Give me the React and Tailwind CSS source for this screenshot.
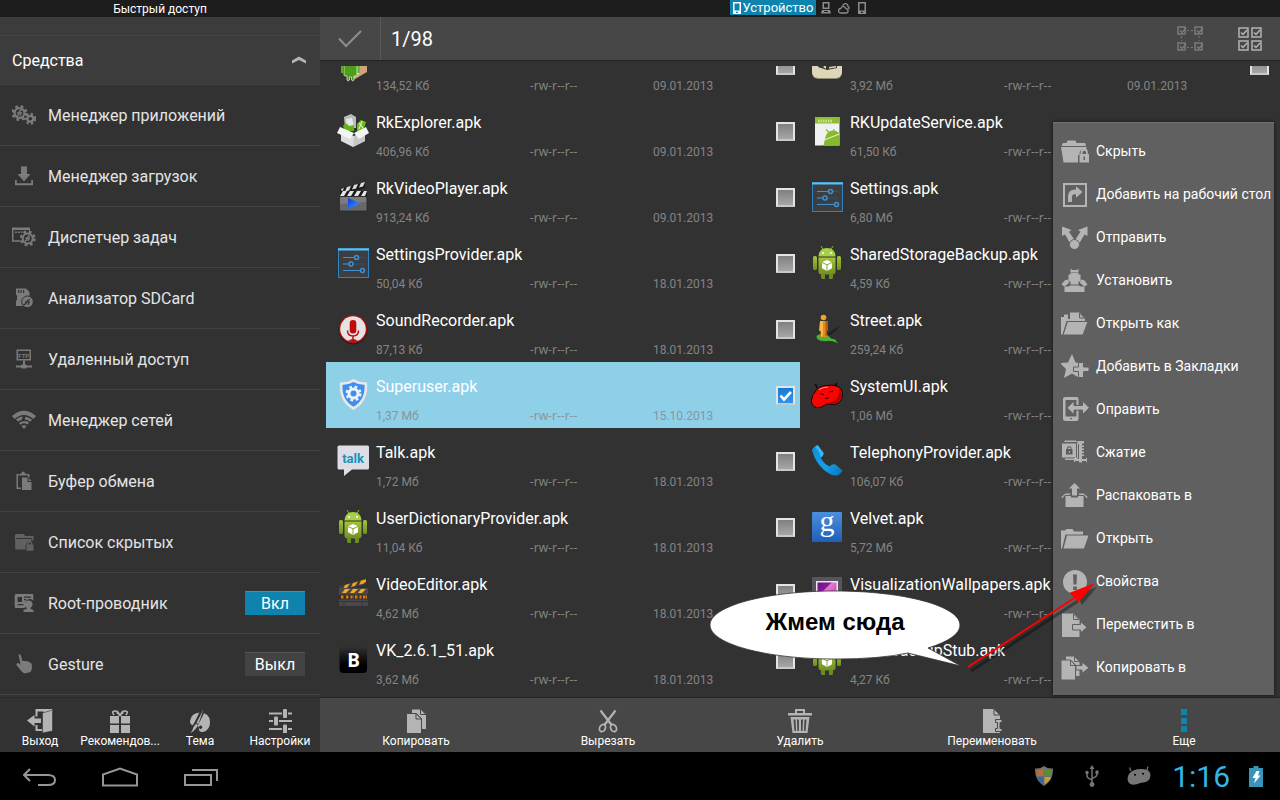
import { useState } from 'react';
import clsx from 'clsx';

/* ---------- small drawing helpers ---------- */

function Svg({ w = 24, h = 24, className, children }) {
  return (
    <svg width={w} height={h} viewBox={`0 0 ${w} ${h}`} fill="currentColor" className={clsx('shrink-0', className)} aria-hidden="true">
      {children}
    </svg>
  );
}

function Gear({ cx, cy, r, hole, n = 8 }) {
  const tooth = (Math.PI * (r + 1)) / n;
  return (
    <g fill="none" stroke="currentColor">
      <circle cx={cx} cy={cy} r={r + 0.8} strokeWidth="2.4" strokeDasharray={`${tooth} ${tooth}`} />
      <circle cx={cx} cy={cy} r={(r + hole) / 2} strokeWidth={r - hole} />
    </g>
  );
}

/* ---------- sidebar icons ---------- */

const gearsIcon = (
  <Svg>
    <Gear cx={7.5} cy={10} r={6} hole={3.8} />
    <path d="M4.500 12.800q2 0 2.500-2.800t3-2.800M5 9.800h5M8 12.800l1.200-3" fill="none" stroke="currentColor" strokeWidth="1.300" />
    <Gear cx={18.3} cy={15.800} r={4} hole={1.8} n={7} />
  </Svg>
);

const downloadIcon = (
  <Svg>
    <path d="M9 2.500h6v7.500h3.500l-6.500 7.500l-6.500-7.500h3.500z" />
    <path d="M3 16h1.800v3.200h14.400v-3.200h1.800v5.300h-18z" />
  </Svg>
);

const tasksIcon = (
  <Svg>
    <path d="M0 2.500h18v3.500h-1.500v-1h-15v10.200h7v1.600h-8.500z" />
    <path d="M3 6.500h2v1.500h-2zM6 6.500h2v1.500h-2zM9 6.500h2v1.500h-2z" />
    <circle cx="15.700" cy="13.400" r="8" fill="#323232" />
    <Gear cx={15.700} cy={13.400} r={6} hole={4} />
    <path d="M12.700 16q2 0 2.500-2.600t3-2.600M13.200 13.200h5M16 16l1.200-2.800" fill="none" stroke="currentColor" strokeWidth="1.300" />
  </Svg>
);

const sdIcon = (
  <Svg>
    <path fillRule="evenodd" d="M4 2.500h10l3.500 3.500v14h-13.500v-5l1-1.500v-4l-1-1zM6 4v3h1.200v-3zM8.500 4v3h1.200v-3zM11 4v3h1.200v-3z" />
    <circle cx="15.500" cy="15.800" r="5.800" stroke="#323232" />
    <path d="M11.500 18.500q2.500 0 3.200-2.500t3.300-2.500M13 15.800h5M16 18.800l1.400-3" fill="none" stroke="#323232" strokeWidth="1.200" />
  </Svg>
);

const ftpIcon = (
  <Svg>
    <path fillRule="evenodd" d="M4.500 2.500h14.500v11h-14.500zM6 4v8h11.500v-8z" />
    <text x="11.750" y="10.500" textAnchor="middle" fontSize="6" fontWeight="700" fontFamily="Roboto, sans-serif">FTP</text>
    <path d="M11 13.500h2v4.500h-2zM4 18.500h5l1-1h4l1 1h5v2h-5l-1 1h-4l-1-1h-5z" />
  </Svg>
);

const wifiIcon = (
  <Svg>
    <path d="M0 8q12-10.500 24 0l-2.600 3q-9.400-8-18.800 0z" />
    <path d="M4 11.600q3.500-3 7-3l-1.500 3.400q-2 .3-3.500 1.800zM13.500 8.700q3.500.4 6.500 3l-1.700 2q-2.600-2.200-5.800-2.200z" />
    <path d="M7 15q2-1.800 4.500-1.700h3.500q1.300.6 2 1.500l-1.600 1.700q-3.400-2.400-6.800.2zM9.500 18q2.500-1.600 5 0l-2.500 3z" />
  </Svg>
);

const clipboardIcon = (
  <Svg>
    <path d="M4.500 5h3v1.500h-1.500v12h3v1.500h-4.500zM14.500 5h3v3.500h-1.500v-2h-1.500z" />
    <path d="M8 6.500v-2h1.500q.5-2 1.700-2t1.700 2h1.600v2z" />
    <path d="M10 8.500h5.500v4.500h4v8h-9.500z" />
    <path d="M16.500 9l3 3h-3z" />
  </Svg>
);

const hiddenIcon = (
  <Svg>
    <path d="M4 4h8l1 2h8.500v4.500h-1.500v-2.500h-15.500v3h-1.500v-6z" />
    <path d="M4.500 9h15v2q-4.500-.5-5 3v1h-1v4.500h-9q-1.300 0-1.300-1.500v-7.500z" />
    <path fillRule="evenodd" d="M14.500 14.500h1v-1.500q.3-2 2.400-2t2.400 2v1.500h1.200v6.200h-7zM16.800 14.500h2.200v-1.300q-1.100-1.400-2.200 0z" />
  </Svg>
);

const rootIcon = (
  <Svg>
    <path fillRule="evenodd" d="M4 3h16.500q.8.2.8 1v5.500q-3-2.500-6.200-.8q-3 2-1.500 6.300l-1 2h-8.600q-1.300 0-1.300-1.300v-11.400q.1-1 1.300-1.300zM5.500 6v5h4.500v-5zM12 5.500v1.200h7v-1.200zM12 8v1.200h2v-1.200zM5.500 13v1.200h6v-1.200z" />
    <path d="M16.700 9.500a3.600 3.800 0 0 1 1.800 7.200v1l3 1.300v2h-10v-2l3.200-1.300v-1a3.600 3.800 0 0 1 2-7.200z" />
  </Svg>
);

const handIcon = (
  <Svg>
    <path d="M6.500 2.500q1.600-1 2.200.8l1.800 6q1.200-1 2.500 0q1.500-.8 2.500.3q1.500-.5 2.200.8q1.600 0 2 1.800l.3 4.500l-1.500 3.300l-5.500 1.500q-2-.3-3.200-2l-5-6q-1-1.500.3-2.200t2.700.8l.8.800z" />
  </Svg>
);

/* ---------- popup menu icons (28x28) ---------- */

const M = ({ children }) => (
  <Svg w={28} h={28} className="text-[#b4b4b4]">{children}</Svg>
);

const lockFolder = (
  <M>
    <path d="M1 6.500l1-1.500h3.500l1-2.500h8l1 2.500h8.500l.8 1.500v1.500h-23.800z" />
    <path d="M0 9h25.500v2.500q-5.500-2-7 3.500v2h-1.500v7.500h-14.500z" />
    <path fillRule="evenodd" d="M18.500 16h1.200v-2q.3-3.600 3.600-3.600t3.500 3.600v2h1.200v8.500h-9.500zM21.500 16h3.600v-2q-1.800-2.600-3.600 0zM22.500 18.500v3.500h1.500v-3.500z" />
  </M>
);

const desktopIcon = (
  <M>
    <path fillRule="evenodd" d="M2 2h24v24h-24zM4 4v20h20v-20z" />
    <path d="M7 21v-6q.4-6.500 7-6.500h1v-3.200l6.500 5.700l-6.500 5.700v-3.400h-1.500q-2.500 0-2.500 2.500v5.200z" />
  </M>
);

const sendIcon = (
  <M>
    <path d="M1 2.500l9.500 3.500l-2.500 1.800l5.500 8.200l-4.500 3l-5-8.500l-3 1.500zM26.500 2.500l-9.500 3.500l2.500 1.800l-5.500 8.200l4.500 3l5-8.500l3 1.500z" />
    <circle cx="13.500" cy="20.500" r="5" stroke="#606060" />
  </M>
);

const installIcon = (
  <M>
    <path d="M9.500 1.500l1.500 1.500h5l1.500-1.500v3.500h-8z" />
    <path d="M9.500 5.500h8v2h2v7h-2v3h-8v-3h-2v-7h2z" />
    <path d="M7 12.500l-3.500 1l-3 4l3 2l4.500-3.500zM20 12.500l3.500 1l3 4l-3 2l-4.500-3.500z" />
    <path d="M3.500 19.500h4l1.500-1h9l1.500 1h4v5.500h-20z" />
  </M>
);

const openAsIcon = (
  <M>
    <path d="M0 7h3v-2.500h4v4.500h17v2h-18.500l-4 13.500h-1.500z" />
    <path d="M9 2.500h9.500l5 5.500v2.500h-14.500z" />
    <path d="M18.500 3v5h5z" stroke="#606060" />
    <path d="M6.500 11.500h20.500l-5 13.500h-20z" stroke="#606060" />
  </M>
);

const bookmarkIcon = (
  <M>
    <path d="M11 1l3.500 8.500l9 .5l-7 6l2 9l-7.500-4.500l-8 4.500l2-9l-6-6l8-.5z" />
    <path d="M17.500 9.500h5v4.500h5.500v4.500h-5.500v6h-5v-6h-5v-4.500h5z" stroke="#606060" />
  </M>
);

const transferIcon = (
  <M>
    <path fillRule="evenodd" d="M4.500 1h11q2 0 2 2v20q0 2-2 2h-11q-2.500 0-2.500-2v-20q0-2 2.500-2zM4.500 4v16.500h11v-16.500zM9.200 22v1.300h1.800v-1.300z" />
    <path d="M6 11.800l7-6.800v4.500h8.500v-4.500l7 6.800l-7 6.800v-4.500h-8.500v4.500z" stroke="#606060" />
  </M>
);

const zipIcon = (
  <M>
    <path d="M4 1.500h11l1 1.500h-13zM1 4.500h14v14h-14zM3.500 19.500h10l2-1.500v-14h1.500v15.500l-1.500 1.500h-11z" />
    <path d="M5 10h1v-1.500q2.300-3 4.500 0v1.500h1v5.500h-6.500z" fill="#5c5c5c" />
    <path d="M7 10h2.600v-1q-1.300-1.500-2.600 0zM7.800 12h1v2h-1z" />
    <path d="M16.500 2h6.500v2.500h-2v2h2v1.500h-2v1.500h2v1.500h-2v1.500h2v1.500h-2v1.500h2v1.500h-2v3h4v-1h1v4h-1v-1h-4v1.500h-3v-1.500h-4v1h-1v-4h1v1h4v-15h-1.500z" />
    <path d="M15.500 4v14.500" stroke="#606060" />
  </M>
);

const unpackIcon = (
  <M>
    <path d="M13.500 1l5.500 5.500h-3v7h-5v-7h-3z" />
    <path d="M4.500 14h5.500v1.500h7v-1.500h5.500v11h-18z" />
    <path d="M4.500 11.500h5l-1 1.500h-4.500l-2.500 3l-1.500-.8zM22.500 11.500h-5l1 1.500h4.500l2.500 3l1.500-.8z" />
  </M>
);

const openIcon = (
  <M>
    <path d="M0 5.500h4l1.500-1.500h6l1.500 2.500h9v3h-17.500l-3.500 14h-1z" />
    <path d="M6 10.500h21.500l-4.500 13h-20.500z" />
  </M>
);

const propsIcon = (
  <M>
    <path fillRule="evenodd" d="M14 2a12 12 0 1 1 0 24a12 12 0 0 1 0-24zM12 6.500l.5 10h3l.5-10zM12.200 18.500v3.500h3.600v-3.500z" />
  </M>
);

const moveIcon = (
  <M>
    <path d="M1 2.500h11.500l6 6v17.500h-17.500z" />
    <path d="M12.500 3v5.500h5.500z" stroke="#606060" />
    <path d="M11.500 13.500h8v-3l6.500 5.800l-6.500 5.700v-3h-8z" stroke="#606060" />
  </M>
);

const copyToIcon = (
  <M>
    <path d="M5 2.500h8.500l5 5v14.500h-13.500z" />
    <path d="M13.500 2.500v5h5z" stroke="#606060" />
    <path d="M0 6h9.500l5 5v15h-14.500z" stroke="#606060" />
    <path d="M9.500 6v5.500h5z" stroke="#606060" />
    <path d="M15 11.500h6v-3.500l7 5.800l-7 5.700v-3.500h-6z" stroke="#606060" />
  </M>
);

/* ---------- toolbar icons ---------- */

const exitIcon = (
  <Svg w={26}>
    <path d="M8.500 0h17v3l-9 1v-1.500h-6v5h-2zM8.500 16h2v4h5v2h-7z" />
    <path d="M15.500 4l10-3v21l-10 2z" stroke="#323232" strokeWidth=".6" />
    <path d="M0 11.500l7.500-5.500v3.500h6.500v4.500h-6.500v3.500z" />
  </Svg>
);

const giftIcon = (
  <Svg>
    <path d="M2 7h9v7.500h-9zM13 7h9v7.500h-9zM2 16h9v8h-9zM13 16h9v8h-9z" />
    <path d="M11.500 7q-.5-5-4.500-5t-1 4M12.500 7q.5-5 4.500-5t1 4M12 7q-1-3-3.500-3M12 7q1-3 3.500-3" fill="none" stroke="currentColor" strokeWidth="1.700" />
  </Svg>
);

const themeIcon = (
  <Svg>
    <path fillRule="evenodd" d="M12 3.500q9.500.5 10 9t-7 10.500q-4 .5-4-3t-2.500-3.500q-6.500 1-6.500-4.500q1-8 10-8.500zM12.600 16.500a1.700 1.700 0 1 0 .1 0z" />
    <path d="M15.500 0l-7 14.500l-5.500 9" stroke="#323232" strokeWidth="4.500" fill="none" />
    <path d="M15.500 0l-5 15l-2-1zM8 14.700l2 1.300q-1.500 4.500-7.500 8q2.500-3.500 3-6z" />
  </Svg>
);

const settingsIcon = (
  <Svg>
    <path d="M1 3.500h13v2h-13zM20 3.500h4v2h-4zM1 11h4v2h-4zM11 11h13v2h-13zM1 19h13v2h-13zM20 19h4v2h-4z" />
    <rect x="15" y="0" width="4" height="9" rx="1" />
    <rect x="6" y="7.500" width="4" height="9" rx="1" />
    <rect x="15" y="15.500" width="4" height="9" rx="1" />
  </Svg>
);

const copyIcon = (
  <Svg>
    <path d="M8 .5h9l5 5v14.500h-14z" />
    <path d="M16.500 0v5.500h5.500z" stroke="#474747" />
    <path d="M2.500 4.500h10l5 5v15h-15z" stroke="#474747" />
    <path d="M12 4.500v5.500h5.500z" stroke="#474747" />
  </Svg>
);

const cutIcon = (
  <Svg>
    <path d="M4.500 1.500l11.500 15M19.500 1.500l-11.500 15" fill="none" stroke="currentColor" strokeWidth="2.200" />
    <g fill="none" stroke="currentColor" strokeWidth="1.800">
      <ellipse cx="6.500" cy="19" rx="2.800" ry="3.800" transform="rotate(28 6.500 19)" />
      <ellipse cx="17.500" cy="19" rx="2.800" ry="3.800" transform="rotate(-28 17.500 19)" />
    </g>
  </Svg>
);

const trashIcon = (
  <Svg>
    <path fillRule="evenodd" d="M7 0h10v4h7v2.500h-24v-2.500h7zM9 2v2h6v-2z" />
    <path fillRule="evenodd" d="M2.500 8h19l-2 16h-15zM5.500 10.500l1 11.500h1.500l-.5-11.500zM9 10.500l.4 11.500h1.500v-11.500zM13 10.500v11.500h1.500l.5-11.500zM16.500 10.500l-.5 11.500h1.500l1-11.500z" />
  </Svg>
);

const renameIcon = (
  <Svg>
    <path d="M3 0h11.500l5.500 6v18h-17z" />
    <path d="M14 0v6h6z" stroke="#474747" />
    <path d="M15.500 10.500h6.500v3h-2v6h2v3h-6.500v-3h2v-6h-2z" stroke="#474747" />
  </Svg>
);

const moreIcon = (
  <Svg className="text-[#0e83ad]">
    <path d="M9 0h6v6h-6zM9 9h6v6h-6zM9 17h6v6h-6z" />
  </Svg>
);

/* ---------- file icons (32x34) ---------- */

const A = ({ children }) => (
  <svg width="32" height="34" viewBox="0 0 32 34" className="shrink-0" aria-hidden="true">{children}</svg>
);

const androidApp = (
  <A>
    <defs>
      <linearGradient id="droid" x1="0" y1="0" x2="0" y2="1">
        <stop offset="0" stopColor="#a6c43a" />
        <stop offset="1" stopColor="#6e8f22" />
      </linearGradient>
    </defs>
    <path d="M10 0l2 3.500M22 0l-2 3.500" stroke="#8fb32c" strokeWidth="1" />
    <path d="M7.500 10.500q.5-8.500 8.500-8.500t8.500 8.500z" fill="#a7d04a" />
    <circle cx="12" cy="7" r="1" fill="#fff" />
    <circle cx="20" cy="7" r="1" fill="#fff" />
    <rect x="2" y="10" width="4" height="14" rx="1.500" fill="url(#droid)" />
    <rect x="26" y="10" width="4" height="14" rx="1.500" fill="url(#droid)" />
    <path d="M7.500 11.500h17v14q0 3-3 3h-11q-3 0-3-3z" fill="url(#droid)" />
    <path d="M10 28h4v5h-2.500q-1.500 0-1.500-1.500zM18 28h4v3.500q0 1.500-1.500 1.500h-2.500z" fill="#6b8c22" />
    <path d="M16 14l5 2.300v6l-5 2.700l-5-2.700v-6z" fill="#fff" />
    <path d="M11 16.500l5 2.300l5-2.300M16 18.800v6" fill="none" stroke="#8aa63b" strokeWidth="1" />
  </A>
);

const slidersApp = (
  <A>
    <rect x="1.500" y="2.500" width="30" height="29" fill="#3c3e41" stroke="#2f83c0" />
    <path d="M1 3.500h31" stroke="#5bc3f0" strokeWidth="2" />
    <path d="M6 11.500h21M6 18h21M6 24.500h21" stroke="#22577f" strokeWidth="1.200" />
    <path d="M6 11.500h12M6 18h7M6 24.500h18" stroke="#4090cf" strokeWidth="1.200" />
    <g fill="#3c3e41" stroke="#4090cf" strokeWidth="1.500">
      <circle cx="19.500" cy="11.500" r="2" />
      <circle cx="14" cy="18" r="2" />
      <circle cx="25.500" cy="24.500" r="2" />
    </g>
  </A>
);

const marketApp = (
  <A>
    <path d="M3 10h27v14l-12 7l-4-2z" fill="#d0a37e" />
    <path d="M4 14h18v12h-2v-9z" fill="#dfeedd" />
    <path d="M7 15h13v12q0 1-1.500 1h-1.500v4q-1 2-2.500 0v-3h-2v3q-1.500 2-2.500 0v-4h-1.500q-1.500 0-1.500-1z" fill="#4f9d1c" stroke="#d5eec2" strokeWidth=".8" />
    <path d="M5 18v7M21.500 18v7" stroke="#5cad25" strokeWidth="2" />
  </A>
);

const boxApp = (
  <A>
    <path d="M7 3l7-3l5 3v11h-11z" fill="#b9bdb9" />
    <path d="M9 5l6-1l2 9l-7 2z" fill="#e5e8e5" />
    <path d="M6 12q3-5 6 0l5-1v6h-9z" fill="#62b517" />
    <path d="M20 10l4-4l5 2l-3 9h-6z" fill="#6fc01f" />
    <path d="M22 9l4 5M25 7l-3 8" stroke="#fff" strokeWidth=".9" />
    <path d="M4 18l13 4l11-4v9l-12 6l-12-6z" fill="#dedede" />
    <path d="M17 22l11-4v9l-12 6z" fill="#c7c7c7" />
    <path d="M3 13l14 6l-4 6l-13-6zM29 13l-12 6l5 6l10-6z" fill="#f4f4f4" />
  </A>
);

const clapperApp = (
  <A>
    <defs>
      <linearGradient id="play" x1="0" y1="0" x2="1" y2="1">
        <stop offset="0" stopColor="#1133e8" />
        <stop offset="1" stopColor="#35a8ff" />
      </linearGradient>
    </defs>
    <path d="M3 9l25-7v6l-25 6z" fill="#1b1b1b" />
    <path d="M10 7l4-1l-2 4.500l-4 1zM17 5l4-1l-2 4.500l-4 1zM24 3l4-1l-2 4.500l-4 1zM4 9l3-1l-2 4z" fill="#ddd" />
    <rect x="3" y="11" width="27" height="5" fill="#1b1b1b" />
    <path d="M6 11h4l-3 5h-4zM13 11h4l-3 5h-4zM20 11h4l-3 5h-4zM27 11h3l-2 5h-4z" fill="#e6e6e6" />
    <rect x="2.500" y="17" width="27.500" height="14" fill="#67686b" stroke="#2a2a2a" strokeWidth=".8" />
    <path d="M3 17h26v5l-26 2z" fill="#7b7c7f" />
    <path d="M11 18l12 5.500l-12 5.500z" fill="url(#play)" />
  </A>
);

const micApp = (
  <A>
    <circle cx="16" cy="18" r="14.500" fill="#222" />
    <circle cx="16" cy="17" r="14" fill="#b90d0d" />
    <circle cx="16" cy="17" r="12.800" fill="#e6e2e2" />
    <rect x="12.700" y="8" width="6.600" height="13.500" rx="3.200" fill="#c00a0a" />
    <path d="M10.500 18.500q0 5.500 5.500 5.500t5.500-5.500M16 24v5" fill="none" stroke="#b31313" strokeWidth="1.500" />
    <path d="M11 29q5-4 10 0l-5 1.500z" fill="#b31313" />
  </A>
);

const shieldApp = (
  <A>
    <path d="M16.500 .5q6 4 14 3.500q2 20-14 28.500q-16-8.500-14-28.500q8 .5 14-3.500z" fill="#e6e9ec" stroke="#aab8c2" strokeWidth=".6" />
    <path d="M16.500 4q5 3 11 2.800q1 15-11 22q-12-7-11-22q6 .2 11-2.800z" fill="#3f90ee" />
    <g className="text-[#eef3f8]"><Gear cx={16.5} cy={15.5} r={6} hole={3} /></g>
  </A>
);

const talkApp = (
  <A>
    <path d="M2 1.500h28.500q1.500 0 1.500 1.500v21q0 1.500-1.500 1.500h-15.500l-8 6.500v-6.500h-5q-1.500 0-1.500-1.500v-21q0-1.500 1.500-1.500z" fill="#dddde6" />
    <text x="16" y="18.500" textAnchor="middle" fontSize="13" fontWeight="700" fontFamily="Roboto, sans-serif" fill="#2191b8">talk</text>
  </A>
);

const editorApp = (
  <A>
    <path d="M2 10l27-7v5l-27 7z" fill="#3d3d40" />
    <path d="M8 9l5-1.500l-3 4.500l-4 1zM16 7l5-1.500l-3 4.500l-4 1zM24 4.500l5-1.300v2.500l-3 2.200l-4 .8z" fill="#f2a21b" />
    <rect x="2" y="12" width="29" height="18" fill="#49494d" />
    <path d="M8 13h5l-4 4h-4zM16 13h5l-4 4h-4zM24 13h5l-4 4h-4z" fill="#f5ab22" />
    <path d="M2 18.500h29v5h-29z" fill="#35312e" />
    <path d="M4 21h3M9 21h3M13.500 21h3M18 21h3M22.500 21h2M26 21h4" stroke="#e07a12" strokeWidth="3" strokeDasharray="2 .6" />
    <path d="M2 25.500h29M7 26v3M25 26v3" stroke="#333338" strokeWidth="1" />
  </A>
);

const vkApp = (
  <A>
    <defs>
      <linearGradient id="vk" x1="0" y1="0" x2="0" y2="1">
        <stop offset="0" stopColor="#333" />
        <stop offset=".7" stopColor="#000" />
      </linearGradient>
    </defs>
    <rect x="2.500" y="4" width="27.500" height="27" rx="4" fill="url(#vk)" />
    <text x="16.500" y="24.500" textAnchor="middle" fontSize="19" fontWeight="700" fontFamily="'Noto Sans', sans-serif" fill="#fff">B</text>
  </A>
);

const creamApp = (
  <A>
    <rect x="1" y="1" width="30" height="30" rx="6" fill="#8f8a72" />
    <rect x="1" y="0" width="30" height="30" rx="6" fill="#ddd6b8" />
    <path d="M7 12h7l8 2l4-2v8l-10 2l-9-3z" fill="#37342c" />
    <path d="M12 19l3-2v4zM18 19l7-1v1.500l-7 1z" fill="#ddd6b8" />
  </A>
);

const updateApp = (
  <A>
    <rect x="4" y="3" width="24.500" height="28.500" fill="#f0f0f0" />
    <rect x="4" y="3" width="24.500" height="6.500" fill="#8dbd31" />
    <path d="M7 7h15" stroke="#c9e39a" strokeWidth="3" strokeDasharray="1.500 1" />
    <path d="M14 25q1-8 8-8.500q4 0 6.500 3v12h-16z" fill="#86b92c" />
    <path d="M15 15.500l3 3M23 15l-.5 3" stroke="#86b92c" strokeWidth="1.200" />
    <path d="M13 26l15.500-6" stroke="#e2efc6" strokeWidth="1.200" />
  </A>
);

const streetApp = (
  <A>
    <path d="M16 22l12-8l-2 4l-8 6z" fill="#222" />
    <path d="M5 24q4-4 12-1q2 4 7 4l4 5q-8-4-14-2.500q-9 0-9-5.500z" fill="#4fae3f" stroke="#1d3d18" strokeWidth=".7" />
    <circle cx="12.500" cy="5.500" r="2.800" fill="#f3a41d" />
    <path d="M9 9h7.500v10h-1v6h-6v-6h-1.500z" fill="#e98a16" />
    <path d="M9 9h3v14l-1 1.500h-1v-6h-1.500z" fill="#f7b84a" />
    <path d="M14.500 9h2.500v10h-1.500v5h-1z" fill="#b9590d" />
  </A>
);

const beanApp = (
  <A>
    <path d="M6 10l-1.500-4M24 8l2-3" stroke="#0a0a0a" strokeWidth="1.500" fill="none" />
    <path d="M4 14q3-6 12-6.500q10-1.500 14 3.500q3 6-.5 12q-3 4-9 3.500q-3-1-6 0q-4 4-9 3q-5.500-1.500-5-7.500q.5-5 3.500-8z" fill="#f70505" stroke="#1a0000" />
    <path d="M28.500 11q3.500 6 0 11.500q-3 3.500-8 3.500q-3-1-5-.5q7-1.500 10.500-5q2.500-4 2.500-9.500z" fill="#b00000" />
    <path d="M9 15.500l4 1M18 14l4-1M14 20q2 1.500 4-.5" stroke="#310000" strokeWidth="1" fill="none" />
    <path d="M8 11.500q4-2.500 9-2.500" stroke="#ff9a9a" strokeWidth="1" fill="none" />
  </A>
);

const phoneApp = (
  <A>
    <defs>
      <linearGradient id="tel" x1="0" y1="0" x2="1" y2="1">
        <stop offset="0" stopColor="#0f8fe0" />
        <stop offset=".6" stopColor="#12a0e8" />
        <stop offset="1" stopColor="#0870b8" />
      </linearGradient>
    </defs>
    <path d="M1 6q2-4 5.500-5l6 8q0 3-3 4.500q3 6 9 9q3-3 6-2l7 6q-2 4-5.500 5q-6 .5-13-5.500q-9-8-12-20z" fill="url(#tel)" />
    <path d="M6.500 1l6 8q0 3-3 4.500q-.5-6-5-10z" fill="#38b9f7" />
  </A>
);

const velvetApp = (
  <A>
    <defs>
      <linearGradient id="goog" x1="0" y1="0" x2="0" y2="1">
        <stop offset="0" stopColor="#4b90dd" />
        <stop offset="1" stopColor="#1f5fb8" />
      </linearGradient>
    </defs>
    <rect x="1" y="2" width="30" height="30" rx="1" fill="url(#goog)" />
    <text x="16" y="21" textAnchor="middle" fontSize="30" fontFamily="'Liberation Serif', serif" fill="#fff">g</text>
  </A>
);

const wallpaperApp = (
  <A>
    <defs>
      <linearGradient id="wall" x1="0" y1="0" x2="1" y2="1">
        <stop offset="0" stopColor="#6a1190" />
        <stop offset=".35" stopColor="#8a1a9a" />
        <stop offset=".4" stopColor="#e57ad6" />
        <stop offset="1" stopColor="#c12aa0" />
      </linearGradient>
    </defs>
    <rect x="1" y="1" width="30" height="30" fill="#55555b" />
    <rect x="5" y="5" width="22" height="22" fill="#e8e8e8" />
    <rect x="6.500" y="6.500" width="19" height="19" fill="url(#wall)" />
  </A>
);

/* ---------- data ---------- */

const TOOLS = [
  { label: 'Менеджер приложений', icon: gearsIcon },
  { label: 'Менеджер загрузок', icon: downloadIcon },
  { label: 'Диспетчер задач', icon: tasksIcon },
  { label: 'Анализатор SDCard', icon: sdIcon },
  { label: 'Удаленный доступ', icon: ftpIcon },
  { label: 'Менеджер сетей', icon: wifiIcon },
  { label: 'Буфер обмена', icon: clipboardIcon },
  { label: 'Список скрытых', icon: hiddenIcon, dim: true },
  { label: 'Root-проводник', icon: rootIcon, toggle: true },
  { label: 'Gesture', icon: handIcon, toggle: true },
];

const LEFT_ACTIONS = [
  { label: 'Выход', icon: exitIcon },
  { label: 'Рекомендов...', icon: giftIcon },
  { label: 'Тема', icon: themeIcon },
  { label: 'Настройки', icon: settingsIcon },
];

const FILE_ACTIONS = [
  { label: 'Копировать', icon: copyIcon },
  { label: 'Вырезать', icon: cutIcon },
  { label: 'Удалить', icon: trashIcon },
  { label: 'Переименовать', icon: renameIcon },
  { label: 'Еще', icon: moreIcon },
];

const MENU = [
  { label: 'Скрыть', icon: lockFolder },
  { label: 'Добавить на рабочий стол', icon: desktopIcon },
  { label: 'Отправить', icon: sendIcon },
  { label: 'Установить', icon: installIcon },
  { label: 'Открыть как', icon: openAsIcon },
  { label: 'Добавить в Закладки', icon: bookmarkIcon },
  { label: 'Оправить', icon: transferIcon },
  { label: 'Сжатие', icon: zipIcon },
  { label: 'Распаковать в', icon: unpackIcon },
  { label: 'Открыть', icon: openIcon },
  { label: 'Свойства', icon: propsIcon },
  { label: 'Переместить в', icon: moveIcon },
  { label: 'Копировать в', icon: copyToIcon },
];

const FILES = [
  { name: 'RkApkinstaller.apk', size: '134,52 Кб', date: '09.01.2013', icon: marketApp },
  { name: 'RKGameControl.apk', size: '3,92 Мб', date: '09.01.2013', icon: creamApp },
  { name: 'RkExplorer.apk', size: '406,96 Кб', date: '09.01.2013', icon: boxApp },
  { name: 'RKUpdateService.apk', size: '61,50 Кб', date: '09.01.2013', icon: updateApp },
  { name: 'RkVideoPlayer.apk', size: '913,24 Кб', date: '09.01.2013', icon: clapperApp },
  { name: 'Settings.apk', size: '6,80 Мб', date: '18.01.2013', icon: slidersApp },
  { name: 'SettingsProvider.apk', size: '50,04 Кб', date: '18.01.2013', icon: slidersApp },
  { name: 'SharedStorageBackup.apk', size: '4,59 Кб', date: '18.01.2013', icon: androidApp },
  { name: 'SoundRecorder.apk', size: '87,13 Кб', date: '18.01.2013', icon: micApp },
  { name: 'Street.apk', size: '259,24 Кб', date: '18.01.2013', icon: streetApp },
  { name: 'Superuser.apk', size: '1,37 Мб', date: '15.10.2013', icon: shieldApp },
  { name: 'SystemUI.apk', size: '1,06 Мб', date: '18.01.2013', icon: beanApp },
  { name: 'Talk.apk', size: '1,72 Мб', date: '18.01.2013', icon: talkApp },
  { name: 'TelephonyProvider.apk', size: '106,07 Кб', date: '18.01.2013', icon: phoneApp },
  { name: 'UserDictionaryProvider.apk', size: '11,04 Кб', date: '18.01.2013', icon: androidApp },
  { name: 'Velvet.apk', size: '5,72 Мб', date: '18.01.2013', icon: velvetApp },
  { name: 'VideoEditor.apk', size: '4,62 Мб', date: '18.01.2013', icon: editorApp },
  { name: 'VisualizationWallpapers.apk', size: '2,11 Мб', date: '18.01.2013', icon: wallpaperApp },
  { name: 'VK_2.6.1_51.apk', size: '3,62 Мб', date: '18.01.2013', icon: vkApp },
  { name: 'VoiceBackupStub.apk', size: '4,27 Кб', date: '18.01.2013', icon: androidApp },
];

/* ---------- components ---------- */

function StatusBar() {
  return (
    <header className="flex h-[17px] bg-[#1d1d1d] text-white">
      <p className="w-1/4 text-center text-[12px] leading-[18px]">Быстрый доступ</p>
      <div className="flex flex-1 items-start justify-center pr-1 text-[#8c8c8c]">
        <button className="flex h-[15px] items-center gap-[2px] bg-[#0e83ad] px-[3px] text-[13px] leading-[15px] text-white">
          <Svg w={8} h={12}>
            <path fillRule="evenodd" d="M0 0h8v12h-8zM1.500 1.500v7h5v-7zM3 9.700v1.200h2v-1.200z" />
          </Svg>
          Устройство
        </button>
        <Svg w={10} h={12} className="mt-[2px] ml-[5px]">
          <path fillRule="evenodd" d="M1.500 0h7v7h-7zM3 1.500v4h4v-4zM1 8h8l1 3.500h-10zM3 9v1h4v-1z" />
        </Svg>
        <Svg w={12} h={12} className="mt-[2px] ml-[7px]">
          <path d="M2.500 11q-2-.3-2-2.300t2.300-2.200q.7-2 2.700-1.800t2.400 2q2.200.2 2.200 2.200t-1.800 2.100zM4.500 4q1-2.800 3.300-2.400t2 2.500q1.600.8 1 2.900" fill="none" stroke="currentColor" strokeWidth="1.300" />
        </Svg>
        <Svg w={8} h={12} className="mt-[2px] ml-[8px]">
          <path fillRule="evenodd" d="M0 0h8v12h-8zM1.500 1.500v7h5v-7zM3 9.700v1.200h2v-1.200z" />
        </Svg>
      </div>
    </header>
  );
}

function ActionBar({ items, className }) {
  return (
    <div className={clsx('flex h-[55px] shrink-0', className)}>
      {items.map(item => (
        <button key={item.label} className="flex min-w-0 flex-1 flex-col items-center pt-[11px] text-[#b4b4b4]">
          {item.icon}
          <span className="text-[12px] leading-[16px] whitespace-nowrap text-white">{item.label}</span>
        </button>
      ))}
    </div>
  );
}

function Sidebar() {
  const [on, setOn] = useState({ 'Root-проводник': true, Gesture: false });

  return (
    <aside className="flex w-1/4 flex-col bg-[#323232]">
      <div className="h-[19px] shrink-0 border-b border-[#434343] bg-[#3c3c3c]" />
      <button className="flex h-[49px] shrink-0 items-center justify-between border-b border-[#434343] bg-[#3c3c3c] pr-[14px] pl-3 text-[16px] text-white">
        <span className="pt-[2px]">Средства</span>
        <Svg w={14} h={8} className="text-[#b4b4b4]">
          <path d="M0 4.500l7-4l7 4v3l-7-3.500l-7 3.500z" />
        </Svg>
      </button>
      <ul className="min-h-0 flex-1 overflow-hidden">
        {TOOLS.map(tool => (
          <li key={tool.label} className="flex h-[61px] items-center border-b border-[#434343] pr-[15px] pl-3">
            <button className="flex flex-1 items-center gap-3 text-[16px] text-[#e4e4e4]">
              <span className={tool.dim ? 'text-[#616161]' : 'text-[#7b7b7b]'}>{tool.icon}</span>
              <span className="pt-[2px]">{tool.label}</span>
            </button>
            {tool.toggle && (
              <button
                aria-label={tool.label}
                onClick={() => setOn(prev => ({ ...prev, [tool.label]: !prev[tool.label] }))}
                className={clsx(
                  'h-6 w-[60px] border-t text-[16px] leading-[24px] text-white',
                  on[tool.label] ? 'border-[#2b98bf] bg-[#0e83ad]' : 'border-[#555] bg-[#434343]'
                )}
              >
                {on[tool.label] ? 'Вкл' : 'Выкл'}
              </button>
            )}
          </li>
        ))}
      </ul>
      <ActionBar items={LEFT_ACTIONS} className="border-t border-[#2b2b2b] bg-[#323232]" />
    </aside>
  );
}

function TickBox({ x, y, s = 9 }) {
  return (
    <g fill="none" stroke="currentColor" strokeWidth="1.500">
      <rect x={x} y={y} width={s} height={s} />
      <path d={`M${x + 2} ${y + s / 2}l2 2l4-4.500`} />
    </g>
  );
}

function SelectionBar({ count, total }) {
  return (
    <div className="flex h-11 shrink-0 items-center border-b border-[#222] bg-[#474747]">
      <button aria-label="Готово" className="flex h-full w-[61px] items-center justify-center border-r border-[#585858] text-[#8c8c8c]">
        <Svg w={24} h={18}>
          <path d="M1 8.500l7 7.500l15-15" fill="none" stroke="currentColor" strokeWidth="2.200" />
        </Svg>
      </button>
      <h1 className="flex-1 pt-px pl-[10px] text-[20px] text-white">{count}/{total}</h1>
      <button aria-label="Выбрать диапазон" className="mr-[34px] text-[#7b7b7b]">
        <Svg w={27} h={26}>
          <TickBox x={1} y={1} s={7} />
          <TickBox x={18} y={1} s={7} />
          <TickBox x={1} y={17} s={7} />
          <TickBox x={18} y={17} s={7} />
          <path d="M10 4.500h6M10 21.500h6M4.500 10v5M22 10v5" stroke="currentColor" strokeDasharray="2 2" />
        </Svg>
      </button>
      <button aria-label="Выбрать все" className="mr-[17px] pt-[2px] text-[#b4b4b4]">
        <Svg w={25} h={25}>
          <TickBox x={1} y={1} />
          <TickBox x={14} y={1} />
          <TickBox x={1} y={14} />
          <TickBox x={14} y={14} />
        </Svg>
      </button>
    </div>
  );
}

function FileRow({ file, checked, onToggle }) {
  return (
    <li className={clsx('flex h-[66px] min-w-0', checked && 'bg-[#8fd0e9]')}>
      <div className="pt-4 pl-[11px]">{file.icon}</div>
      <div className="min-w-0 flex-1 pt-[14px] pl-[7px]">
        <p className="text-[16px] leading-[22px] whitespace-nowrap text-white">{file.name}</p>
        <div className={clsx('grid grid-cols-[5fr_4fr_4fr] pt-[9px] text-[12px] leading-[18px]', checked ? 'text-[#8b9499]' : 'text-[#848484]')}>
          <span>{file.size}</span>
          <span className="font-['Noto_Sans',sans-serif]">-rw-r--r--</span>
          <span>{file.date}</span>
        </div>
      </div>
      <label className="relative mt-6 mr-[5px] size-[19px]">
        <input
          type="checkbox"
          aria-label={file.name}
          checked={checked}
          onChange={onToggle}
          className="block size-[19px] appearance-none border-2 border-[#e4e4e4] border-b-[#c8c8c8] bg-linear-to-b from-[#808080] to-[#a6a6a6] checked:from-[#1779d2] checked:to-[#2f95ec]"
        />
        {checked && (
          <Svg w={19} h={19} className="pointer-events-none absolute inset-0 text-white">
            <path d="M4.500 9.500l3.500 4l7-7.500" fill="none" stroke="currentColor" strokeWidth="2.600" />
          </Svg>
        )}
      </label>
    </li>
  );
}

function PopupMenu() {
  return (
    <ul className="absolute right-[6px] bottom-[57px] w-[221px] border-t border-[#707070] bg-[#606060] pt-[7px] pb-[6px] shadow-[0_0_3px_#111]">
      {MENU.map(item => (
        <li key={item.label}>
          <button className="flex h-[43px] w-full items-center gap-[7px] pl-2 text-[14px] whitespace-nowrap text-white">
            {item.icon}
            {item.label}
          </button>
        </li>
      ))}
    </ul>
  );
}

// speech balloon with an arrow that points at the "Свойства" item
function Hint() {
  return (
    <div className="pointer-events-none absolute right-[180px] bottom-[72px] h-[100px] w-[400px]">
      <svg width="400" height="100" viewBox="0 0 400 100" aria-hidden="true">
        <path d="M228 68Q260 58 260 45C260 26 204 11 135 11S10 26 10 45S66 79 135 79Q180 79 208 73L261 86Z" fill="#fff" stroke="#333" strokeWidth=".8" />
        <g opacity=".35" transform="translate(3 4)">
          <path d="M268 87l107-70" stroke="#000" strokeWidth="3" />
          <path d="M394 3l-15 18l-3-6l-7-3z" fill="#000" />
        </g>
        <path d="M268 87l108-70" stroke="#f00" strokeWidth="2" />
        <path d="M395 3l-17 20l-3-6l-6-4z" fill="#f00" />
      </svg>
      <p className="absolute inset-x-0 top-[27px] pr-[130px] text-center font-['Liberation_Sans',Arial,sans-serif] text-[24px] leading-[30px] font-bold text-black">
        Жмем сюда
      </p>
    </div>
  );
}

function FileManager() {
  const [selected, setSelected] = useState(['Superuser.apk']);

  const toggle = name => {
    setSelected(prev => (prev.includes(name) ? prev.filter(n => n !== name) : [...prev, name]));
  };

  return (
    <main className="relative flex min-w-0 flex-1 flex-col bg-[#323232]">
      <SelectionBar count={selected.length} total={98} />
      <div className="mx-[6px] mt-[5px] min-h-0 flex-1 overflow-hidden">
        <ul className="-mt-[34px] grid grid-cols-2">
          {FILES.map(file => (
            <FileRow key={file.name} file={file} checked={selected.includes(file.name)} onToggle={() => toggle(file.name)} />
          ))}
        </ul>
      </div>
      <ActionBar items={FILE_ACTIONS} className="border-t border-[#222] bg-[#474747]" />
      <PopupMenu />
      <Hint />
    </main>
  );
}

function NavBar() {
  return (
    <footer className="flex h-12 shrink-0 items-center justify-between bg-black">
      <div className="flex items-center pt-px text-[#969696]">
        <button aria-label="Назад" className="flex w-20 justify-center">
          <Svg w={34} h={20}>
            <path d="M7 2l-6 6l6 6M1 8h24q7 0 7 5t-7 5h-10" fill="none" stroke="currentColor" strokeWidth="2" />
          </Svg>
        </button>
        <button aria-label="Домой" className="flex w-20 justify-center">
          <Svg w={38} h={20}>
            <path d="M2 18.500v-11l17-6l17 6v11z" fill="none" stroke="currentColor" strokeWidth="2" />
          </Svg>
        </button>
        <button aria-label="Недавние" className="flex w-20 justify-center">
          <Svg w={36} h={20}>
            <path d="M3 8h26v10h-26zM10 3h25v11" fill="none" stroke="currentColor" strokeWidth="2" />
          </Svg>
        </button>
      </div>
      <div className="flex items-center pr-[17px] text-[#767676]">
        <Svg w={18} h={20}>
          <path d="M9 0q4 3 9 2.500q.5 12-9 17.500q-9.500-5.500-9-17.500q5 .5 9-2.500z" fill="#6e6e6e" />
          <path d="M8.500 2v8h-7v-6q4 0 7-2z" fill="#b0703a" />
          <path d="M9.500 2v8h7v-6q-4 0-7-2z" fill="#5c8d36" />
          <path d="M8.500 11v7q-5.500-3-6.500-7z" fill="#3566ad" />
          <path d="M9.500 11v7q5.500-3 6.500-7z" fill="#c4a431" />
        </Svg>
        <Svg w={14} h={22} className="ml-[32px]">
          <path d="M7 2v17M2 8v3q0 2 5 4M12 8v1.500q0 2-5 4" fill="none" stroke="currentColor" strokeWidth="1.500" />
          <path d="M7 0l2.500 4h-5zM10.500 5.500h3v3.500h-3z" />
          <circle cx="2" cy="7.500" r="1.700" />
          <circle cx="7" cy="19.500" r="2.400" />
        </Svg>
        <Svg w={24} h={20} className="ml-[28px]">
          <path d="M4 5l-1.500-3.500M20 4l1-3.500" stroke="currentColor" strokeWidth="1.200" />
          <path d="M2 8q4-5 12-5q9-.5 9.500 6q0 6.500-7 7.500q-3.500 0-6 1.500q-6 2-8.500-1q-3-4 0-9z" />
          <path d="M7 8h2v1.500h-2zM15 7h2v1.500h-2z" fill="#000" />
        </Svg>
        <time className="ml-[21px] pt-[2px] text-[30px] leading-[46px] text-[#33b5e5]">1:16</time>
        <Svg w={14} h={21} className="ml-[19px]">
          <path d="M4.500 0h5v2h4.500v19h-14v-19h4.500z" fill="#3a93b8" />
          <path d="M7.500 5h3l-1.500 4.500h2.500l-6.500 8l1.500-5.500h-3z" fill="#fff" />
        </Svg>
      </div>
    </footer>
  );
}

export default function App() {
  return (
    <div className="flex h-screen flex-col overflow-hidden bg-black font-[Roboto,'Noto_Sans',sans-serif]">
      <StatusBar />
      <div className="flex min-h-0 flex-1">
        <Sidebar />
        <FileManager />
      </div>
      <NavBar />
    </div>
  );
}
